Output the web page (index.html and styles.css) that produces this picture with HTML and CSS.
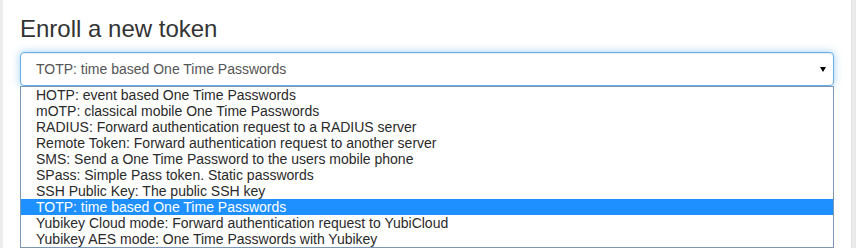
FILE: index.html
```html
<!DOCTYPE html>
<html lang="en">
<head>
  <meta charset="UTF-8" />
  <title>Enroll a new token</title>
  <link rel="stylesheet" href="styles.css">
</head>
<body>

  <div class="page">
    <div class="edge-left"></div>

    <div class="content">
      <h3 class="title">Enroll a new token</h3>

      <div class="select">
        <span class="select-value">TOTP: time based One Time Passwords</span>
        <span class="caret"></span>
      </div>

      <!-- open dropdown -->
      <ul class="options">
        <li>HOTP: event based One Time Passwords</li>
        <li>mOTP: classical mobile One Time Passwords</li>
        <li>RADIUS: Forward authentication request to a RADIUS server</li>
        <li>Remote Token: Forward authentication request to another server</li>
        <li>SMS: Send a One Time Password to the users mobile phone</li>
        <li>SPass: Simple Pass token. Static passwords</li>
        <li>SSH Public Key: The public SSH key</li>
        <li class="selected">TOTP: time based One Time Passwords</li>
        <li>Yubikey Cloud mode: Forward authentication request to YubiCloud</li>
        <li>Yubikey AES mode: One Time Passwords with Yubikey</li>
      </ul>
    </div>

    <div class="edge-right"></div>
  </div>

</body>
</html>
```

FILE: styles.css
```css
* { margin: 0; padding: 0; box-sizing: border-box; }
body {
  background: #fff;
  font-family: "Liberation Sans", Arial, sans-serif;
  color: #333;
  overflow: hidden;
}

.page {
  display: flex;
  height: 248px;
}

.edge-left {
  width: 3px;
  background: #ebebeb;
}

.content {
  width: 848px;
  padding: 0 17px;
}

.edge-right {
  width: 5px;
  background: linear-gradient(to right, #e4e4e4, #eeeeee 50%, #e6e6e6);
}

.title {
  font-size: 24px;
  font-weight: 400;
  line-height: 27px;
  margin: 15px 0 10px;
  color: #333;
}

.select {
  height: 34px;
  display: flex;
  align-items: center;
  justify-content: space-between;
  padding: 0 7px 0 15px;
  border: 1px solid #66afe9;
  border-radius: 4px;
  box-shadow: inset 0 1px 1px rgba(0,0,0,0.075), 0 0 8px rgba(102,175,233,0.6);
  font-size: 14px;
  color: #555;
  position: relative;
  z-index: 1;
  background: #fff;
}

.caret {
  width: 0;
  height: 0;
  border-left: 3px solid transparent;
  border-right: 3px solid transparent;
  border-top: 5px solid #000;
  margin-top: 1px;
}

.options {
  list-style: none;
  border: 1px solid #7a98b6;
  font-size: 14px;
  line-height: 16px;
  color: #2a2a2a;
  background: #fff;
  position: relative;
  z-index: 2;
}

.options li {
  padding-left: 15px;
  height: 16px;
  white-space: nowrap;
}

.options li.selected {
  background: #1e90ff;
  color: #fff;
}
```
